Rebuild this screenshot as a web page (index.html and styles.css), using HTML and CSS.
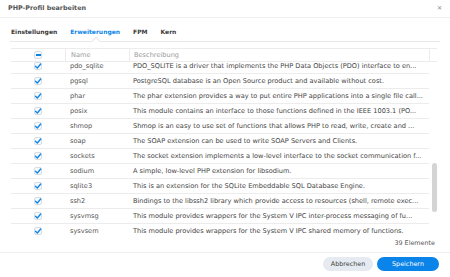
FILE: index.html
```html
<!DOCTYPE html>
<html lang="de">
<head>
  <meta charset="UTF-8">
  <title>PHP-Profil bearbeiten</title>
  <link rel="stylesheet" href="styles.css">
</head>
<body>
  <div class="dialog">
    <div class="dialog-header">
      <span class="dialog-title">PHP-Profil bearbeiten</span>
      <span class="close">&#x2715;</span>
    </div>

    <div class="tabs">
      <span class="tab">Einstellungen</span>
      <span class="tab active">Erweiterungen</span>
      <span class="tab">FPM</span>
      <span class="tab">Kern</span>
    </div>

    <div class="grid">
      <div class="grid-head">
        <div class="cell cell-check"><span class="box"><span class="minus"></span></span></div>
        <div class="cell cell-name">Name</div>
        <div class="cell cell-desc">Beschreibung</div>
        <div class="cell cell-pad"></div>
      </div>

      <div class="grid-body">
        <div class="rows" id="rows"></div>
        <div class="scroll-thumb"></div>
      </div>
    </div>

    <div class="count">39 Elemente</div>

    <div class="dialog-footer">
      <button class="btn btn-cancel">Abbrechen</button>
      <button class="btn btn-save">Speichern</button>
    </div>
  </div>

  <script>
    const extensions = [
      ['pdo_sqlite', 'PDO_SQLITE is a driver that implements the PHP Data Objects (PDO) interface to en...'],
      ['pgsql', 'PostgreSQL database is an Open Source product and available without cost.'],
      ['phar', 'The phar extension provides a way to put entire PHP applications into a single file call...'],
      ['posix', 'This module contains an interface to those functions defined in the IEEE 1003.1 (PO...'],
      ['shmop', 'Shmop is an easy to use set of functions that allows PHP to read, write, create and ...'],
      ['soap', 'The SOAP extension can be used to write SOAP Servers and Clients.'],
      ['sockets', 'The socket extension implements a low-level interface to the socket communication f...'],
      ['sodium', 'A simple, low-level PHP extension for libsodium.'],
      ['sqlite3', 'This is an extension for the SQLite Embeddable SQL Database Engine.'],
      ['ssh2', 'Bindings to the libssh2 library which provide access to resources (shell, remote exec...'],
      ['sysvmsg', 'This module provides wrappers for the System V IPC inter-process messaging of fu...'],
      ['sysvsem', 'This module provides wrappers for the System V IPC shared memory of functions.']
    ];

    const tick = '<svg viewBox="0 0 8 8" width="8" height="8"><path d="M1.5 4.2 L3.3 6 L6.7 2" fill="none" stroke="#0a84e8" stroke-width="1.3" stroke-linecap="round" stroke-linejoin="round"/></svg>';

    const rows = document.getElementById('rows');
    extensions.forEach(([name, desc]) => {
      const row = document.createElement('div');
      row.className = 'row';
      row.innerHTML =
        '<div class="cell cell-check"><span class="box">' + tick + '</span></div>' +
        '<div class="cell cell-name">' + name + '</div>' +
        '<div class="cell cell-desc">' + desc + '</div>';
      rows.appendChild(row);
    });
  </script>
</body>
</html>
```

FILE: styles.css
```css
:root {
  --blue: #0a84e8;
  --text: #444444;
  --muted: #9a9a9a;
  --line: #ececec;
}

* {
  margin: 0;
  padding: 0;
  box-sizing: border-box;
}

body {
  font-family: "DejaVu Sans", Verdana, sans-serif;
  background: #ffffff;
  color: var(--text);
  width: 450px;
  height: 277px;
  overflow: hidden;
}

.dialog {
  display: flex;
  flex-direction: column;
  height: 277px;
}

.dialog-header {
  height: 18px;
  display: flex;
  align-items: center;
  justify-content: space-between;
  padding: 0 8px 2px 8px;
  border-bottom: 1px solid #f0f0f0;
}

.dialog-title {
  font-size: 6.4px;
  font-weight: bold;
  color: #555555;
}

.close {
  font-size: 6px;
  color: #8a8a8a;
}

.tabs {
  display: flex;
  align-items: center;
  height: 24px;
  margin: 0 10px;
  padding-top: 4px;
  border-bottom: 1px solid #e8e8e8;
}

.tab {
  position: relative;
  font-size: 6px;
  font-weight: bold;
  color: #3a3a3a;
  margin-left: 1px;
  margin-right: 12px;
}

.tab.active {
  color: var(--blue);
}

.tab.active::after {
  content: "";
  position: absolute;
  left: 50%;
  bottom: -9px;
  width: 5px;
  height: 5px;
  margin-left: -2px;
  background: #ffffff;
  border-left: 1px solid #e8e8e8;
  border-top: 1px solid #e8e8e8;
  transform: rotate(45deg);
}

.grid {
  margin: 6px 13px 0 11px;
}

.grid-head {
  display: grid;
  grid-template-columns: 54px 64px 300px 8px;
  height: 14px;
  border-top: 1px solid var(--line);
  border-bottom: 1px solid var(--line);
  color: var(--muted);
}

.grid-head .cell-name,
.grid-head .cell-desc,
.grid-head .cell-pad {
  border-left: 1px solid var(--line);
}

.cell {
  display: flex;
  align-items: center;
  font-size: 6.6px;
  white-space: nowrap;
  overflow: hidden;
}

.cell-check {
  justify-content: center;
}

.cell-name {
  padding-left: 5px;
}

.cell-desc {
  padding-left: 4px;
}

.grid-body {
  position: relative;
  height: 174px;
  overflow: hidden;
}

.rows {
  margin-top: -3px;
  width: 418px;
}

.row {
  display: grid;
  grid-template-columns: 54px 64px 300px;
  height: 15px;
  border-bottom: 1px solid var(--line);
}

.row .cell-name {
  color: #555555;
}

.box {
  width: 8px;
  height: 8px;
  border: 1px solid #d6dde6;
  border-radius: 2px;
  background: #f7f9fb;
  display: flex;
  align-items: center;
  justify-content: center;
}

.box svg {
  flex: none;
}

.minus {
  width: 5px;
  height: 1.3px;
  background: var(--blue);
}

.scroll-thumb {
  position: absolute;
  top: 101px;
  right: 0;
  width: 5px;
  height: 49px;
  border-radius: 3px;
  background: #d4d4d4;
}

.count {
  text-align: right;
  font-size: 6.4px;
  color: #555555;
  padding: 3px 15px 0 0;
  height: 17px;
  border-bottom: 1px solid #efefef;
}

.dialog-footer {
  display: flex;
  justify-content: flex-end;
  gap: 4px;
  padding: 4px 11px 0 0;
}

.btn {
  height: 14px;
  border: none;
  border-radius: 7px;
  font-family: inherit;
  font-size: 6.4px;
}

.btn-cancel {
  width: 50px;
  background: #e6ebf1;
  color: #444444;
}

.btn-save {
  width: 62px;
  background: var(--blue);
  color: #ffffff;
}
```
